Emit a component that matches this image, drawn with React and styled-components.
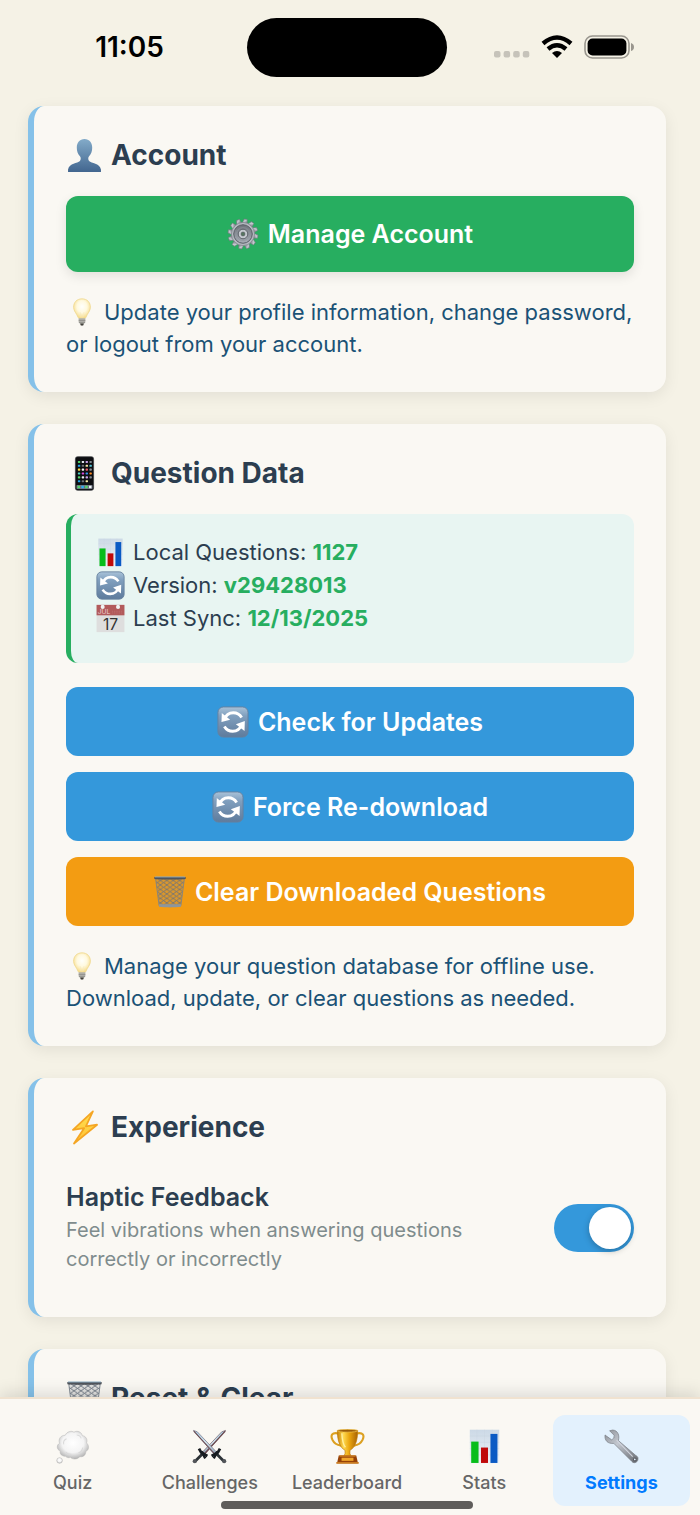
import React from "react";
import { useState } from "react";
import styled, { createGlobalStyle } from "styled-components";

const GlobalStyle = createGlobalStyle`
  * {
    box-sizing: border-box;
  }
  body {
    margin: 0;
    background-color: #f5f2e6;
    font-family: Inter, "Liberation Sans", sans-serif;
  }
`;

// gradients and patterns shared by all the icons
const IconDefs = () => (
  <Hiddensvg aria-hidden="true">
    <defs>
      <linearGradient id="bust" x1="0" y1="0" x2="0" y2="1">
        <stop offset="0" stopColor="#83abc9" />
        <stop offset="1" stopColor="#42668f" />
      </linearGradient>
      <linearGradient id="steel" x1="0" y1="0" x2="1" y2="1">
        <stop offset="0" stopColor="#8d9096" />
        <stop offset="0.4" stopColor="#c3c8d0" />
        <stop offset="1" stopColor="#64676d" />
      </linearGradient>
      <linearGradient id="gearFace" x1="0" y1="0" x2="0" y2="1">
        <stop offset="0" stopColor="#6d7279" />
        <stop offset="1" stopColor="#a9afb8" />
      </linearGradient>
      <radialGradient id="glow" cx="0.5" cy="0.4" r="0.6">
        <stop offset="0" stopColor="#fffffb" />
        <stop offset="0.5" stopColor="#fff9df" />
        <stop offset="1" stopColor="#f6d982" />
      </radialGradient>
      <linearGradient id="button" x1="0" y1="0" x2="0" y2="1">
        <stop offset="0" stopColor="#a9c2d8" />
        <stop offset="0.3" stopColor="#809fbe" />
        <stop offset="1" stopColor="#5e7b9c" />
      </linearGradient>
      <linearGradient id="paper" x1="0" y1="0" x2="0" y2="1">
        <stop offset="0" stopColor="#ccd9e6" />
        <stop offset="1" stopColor="#eef3f8" />
      </linearGradient>
      <linearGradient id="gold" x1="0" y1="0" x2="1" y2="0">
        <stop offset="0" stopColor="#c57f08" />
        <stop offset="0.3" stopColor="#ffd94f" />
        <stop offset="0.6" stopColor="#e9a40d" />
        <stop offset="1" stopColor="#a86305" />
      </linearGradient>
      <linearGradient id="bolt" x1="0" y1="0" x2="0" y2="1">
        <stop offset="0" stopColor="#ffe052" />
        <stop offset="1" stopColor="#ffc233" />
      </linearGradient>
      <radialGradient id="cloud" cx="0.5" cy="0.42" r="0.58">
        <stop offset="0" stopColor="#ffffff" />
        <stop offset="0.6" stopColor="#f4f4f4" />
        <stop offset="1" stopColor="#b4b4b4" />
      </radialGradient>
      <linearGradient id="blade" x1="0" y1="0" x2="0" y2="1">
        <stop offset="0" stopColor="#a5cfe6" />
        <stop offset="0.5" stopColor="#d5e8f2" />
        <stop offset="1" stopColor="#8fa3b5" />
      </linearGradient>
      <pattern id="mesh" width="20" height="14" patternUnits="userSpaceOnUse">
        <path d="M0 0L20 14M20 0L0 14" stroke="#69727e" strokeWidth="2.6" />
      </pattern>
    </defs>
  </Hiddensvg>
);

const shapes = {
  person: (
    <path
      d="M50 3C36 3 28 13 28 28C28 38 31 46 37 52C40 56 40 61 37 66C30 73 7 71 3 90V97H97V90C93 71 70 73 63 66C60 61 60 56 63 52C69 46 72 38 72 28C72 13 64 3 50 3Z"
      fill="url(#bust)"
    />
  ),
  gear: (
    <g>
      {Array.from({ length: 12 }, (_, i) => (
        <path
          key={i}
          d="M42 17L45 3H55L58 17Z"
          fill="url(#steel)"
          stroke="#70747a"
          strokeWidth="1.5"
          transform={`rotate(${i * 30 + 10} 50 50)`}
        />
      ))}
      <circle cx="50" cy="50" r="36" fill="#b7bcc3" stroke="#777b82" strokeWidth="2" />
      <circle cx="50" cy="50" r="29" fill="url(#gearFace)" stroke="#555a61" strokeWidth="3" />
      <circle cx="50" cy="50" r="20" fill="none" stroke="#8e949c" strokeWidth="2" />
      <circle cx="50" cy="50" r="15" fill="#c4c8ce" stroke="#5b6067" strokeWidth="3" />
      <circle cx="50" cy="50" r="6" fill="#55765e" stroke="#53585e" strokeWidth="2" />
    </g>
  ),
  bulb: (
    <g>
      <path
        d="M50 3C31 3 20 16 20 33C20 47 31 55 36 69Q37 73 41 73H59Q63 73 64 69C69 55 80 47 80 33C80 16 69 3 50 3Z"
        fill="url(#glow)"
        stroke="#f0d98f"
        strokeWidth="3"
      />
      <path d="M43 50L47 70M57 50L53 70" stroke="#f6e9c0" strokeWidth="2" />
      <path d="M38 72H62V86Q62 89 58 91L55 97H45L42 91Q38 89 38 86Z" fill="#b3b2ab" />
      <path d="M38 80H62M39 87H61" stroke="#7b7a74" strokeWidth="2" />
      <path d="M44 91H56L54 98H46Z" fill="#44423d" />
    </g>
  ),
  phone: (
    <g>
      <rect x="24" y="2" width="52" height="96" rx="6" fill="#0d0e11" stroke="#3a3c40" strokeWidth="2" />
      {[14, 25, 36, 47, 58, 69].map((y, row) =>
        [31, 42, 53, 64].map((x, col) =>
          row === 5 && col === 3 ? null : (
            <rect
              key={x + "-" + y}
              x={x}
              y={y}
              width="7"
              height="6"
              rx="2"
              fill={
                ["#53d769", "#e8eef3", "#c9a0e8", "#808890", "#21a7ef", "#6d7076", "#f6e7a3", "#54c5d5", "#ffdc40", "#f5f5f5", "#e95b68", "#8a9097", "#4bd0c2", "#d84ad9", "#3692ef", "#ff8a25"][
                  (row * 4 + col) % 16
                ]
              }
            />
          )
        )
      )}
      <rect x="27" y="83" width="46" height="11" rx="2" fill="#6c7380" />
      <path d="M30 85h7v7h-7z" fill="#53d769" />
      <path d="M41 85h7v7h-7z" fill="#2cadf3" />
      <path d="M52 85h7v7h-7z" fill="#53d769" />
      <path d="M63 85h7v7h-7z" fill="#f4f7f9" />
    </g>
  ),
  chart: (
    <g>
      <rect x="8" y="2" width="84" height="96" fill="url(#paper)" />
      <path d="M8 20H92M8 38H92M8 56H92M8 74H92M28 2V98M50 2V98M72 2V98" stroke="#c8d4e0" strokeWidth="1" />
      <rect x="12" y="36" width="21" height="61" fill="#08bd1b" />
      <rect x="40" y="53" width="20" height="44" fill="#c00a0a" />
      <rect x="67" y="14" width="20" height="83" fill="#0a5ac4" />
    </g>
  ),
  refresh: (
    <g>
      <rect x="3" y="3" width="94" height="94" rx="17" fill="url(#button)" stroke="#67819e" strokeWidth="3" />
      <path d="M23 42C28 27 38 21 51 21C62 21 71 26 77 36" fill="none" stroke="#fff" strokeWidth="9" />
      <path d="M77 58C72 73 62 79 49 79C38 79 29 74 23 64" fill="none" stroke="#fff" strokeWidth="9" />
      <path d="M15 22L14 50L41 43Z" fill="#fff" />
      <path d="M87 47L86 78L59 57Z" fill="#fff" />
    </g>
  ),
  calendar: (
    <g>
      <rect x="2" y="3" width="96" height="94" fill="#dedede" />
      <rect x="2" y="3" width="96" height="36" fill="#b25a5b" />
      <circle cx="23" cy="10" r="7" fill="#f0f3f3" />
      <circle cx="76" cy="10" r="7" fill="#f0f3f3" />
      <text x="6" y="35" fontSize="23" fill="#ecd2d2">JUL</text>
      <text x="50" y="90" textAnchor="middle" fontSize="54" fill="#333">17</text>
      <path d="M56 25H90M56 31H90" stroke="#c67b7b" strokeWidth="2" strokeDasharray="3 3" />
    </g>
  ),
  trash: (
    <g>
      <path d="M5 8L16 93Q50 99 84 93L95 8Z" fill="#7c858f" fillOpacity="0.2" />
      <path d="M5 8L16 93Q50 99 84 93L95 8Z" fill="url(#mesh)" stroke="#78818b" strokeWidth="2.5" />
      <path d="M15 88H85L84 96Q50 100 16 96Z" fill="#8d969c" />
      <path d="M1 3H99V9Q50 13 1 9Z" fill="#50545b" />
      <path d="M3 3H97" stroke="#8aa9bf" strokeWidth="3" />
    </g>
  ),
  bolt: (
    <path
      d="M74 4L17 57L49 52L20 96L86 42L54 47Z"
      fill="url(#bolt)"
      stroke="#f5a623"
      strokeWidth="5"
      strokeLinejoin="round"
    />
  ),
  thought: (
    <g stroke="#b9b9b9" strokeWidth="1.5">
      <path
        d="M30 78C19 78 13 71 15 63C4 59 4 45 13 41C8 28 18 17 29 18C34 7 47 4 54 9C65 3 76 9 78 19C89 20 94 31 90 40C99 47 97 61 88 64C88 75 80 81 71 79C64 87 51 88 44 81C39 83 34 82 30 78Z"
        fill="url(#cloud)"
      />
      <circle cx="13" cy="90" r="8" fill="url(#cloud)" />
      <path d="M33 28Q22 33 25 44M62 17Q72 17 75 27M79 53Q77 66 67 68M47 72Q36 74 31 66" fill="none" stroke="#dadada" strokeWidth="3" />
    </g>
  ),
  swords: (
    <g>
      <path d="M96 4L85 8L30 66L37 72Z" fill="url(#blade)" stroke="#77616a" strokeWidth="2" />
      <path d="M95 6L36 70" stroke="#6b4a50" strokeWidth="4" />
      <path d="M4 4L15 8L70 66L63 72Z" fill="url(#blade)" stroke="#777082" strokeWidth="2" />
      <path d="M5 6L64 70" stroke="#6b4a50" strokeWidth="3" />
      <path d="M33 68L9 92M67 68L91 92" stroke="#2c3236" strokeWidth="8" />
      <path d="M20 56L26 67L44 77M80 56L74 67L56 77" fill="none" stroke="#171c20" strokeWidth="8" strokeLinejoin="round" />
      <path d="M27 64L38 84M73 64L62 84" stroke="#171c20" strokeWidth="7" />
      <circle cx="8" cy="92" r="6" fill="#53565a" />
      <circle cx="92" cy="92" r="6" fill="#53565a" />
    </g>
  ),
  trophy: (
    <g>
      <path d="M25 13C5 8 1 19 7 31Q13 44 32 48M75 13C95 8 99 19 93 31Q87 44 68 48" fill="none" stroke="#dca020" strokeWidth="6" />
      <path d="M21 4H79C79 31 73 52 57 61Q55 70 60 78H40Q45 70 43 61C27 52 21 31 21 4Z" fill="url(#gold)" stroke="#bd7b0b" strokeWidth="2" />
      <ellipse cx="50" cy="5" rx="29" ry="4" fill="#9a5c08" stroke="#f3c54f" strokeWidth="2" />
      <path d="M34 12Q35 41 44 52" fill="none" stroke="#fff0a1" strokeWidth="4" />
      <path d="M25 76H75L80 98H20Z" fill="#964107" />
      <path d="M27 75H73V79H27ZM18 94H82V99H18Z" fill="#ca7c21" />
      <rect x="33" y="82" width="34" height="9" fill="#f0a62c" />
    </g>
  ),
  wrench: (
    <g>
      <path
        d="M25 3L16 5L29 18Q31 27 22 31L8 21L3 17C1 33 11 43 28 41L79 92C86 101 99 95 97 82Q96 78 90 75L41 33C45 19 40 4 25 3Z"
        fill="url(#steel)"
        stroke="#777b82"
        strokeWidth="2"
      />
      <path d="M36 32L82 79" stroke="#d0d4dd" strokeWidth="3" />
      <circle cx="88" cy="87" r="4" fill="#e3f1fd" stroke="#595c62" strokeWidth="3" />
    </g>
  ),
};

const Emoji = ({ name, size }) => (
  <Emojisvg viewBox="0 0 100 100" $size={size} aria-hidden="true">
    {shapes[name]}
  </Emojisvg>
);

const StatusBar = () => (
  <Statusdiv>
    <Clock>11:05</Clock>
    <Island />
    <Statusicons>
      <svg width="36" height="24" viewBox="0 0 36 24" fill="#c6c3ba">
        <rect x="0" y="16" width="6.5" height="6.5" rx="2" />
        <rect x="9.6" y="16" width="6.5" height="6.5" rx="2" />
        <rect x="19.2" y="16" width="6.5" height="6.5" rx="2" />
        <rect x="28.8" y="16" width="6.5" height="6.5" rx="2" />
      </svg>
      <svg width="32" height="24" viewBox="0 0 32 24" fill="none" stroke="#000" strokeWidth="4.4">
        <path d="M2 8.5Q16 -3.5 30 8.5" />
        <path d="M7 14Q16 6.5 25 14" />
        <path d="M16 23L11 18Q16 14 21 18Z" fill="#000" stroke="none" />
      </svg>
      <svg width="50" height="24" viewBox="0 0 50 24">
        <rect x="1" y="1" width="44" height="22" rx="7.5" fill="none" stroke="#99968e" strokeWidth="1.6" />
        <rect x="3.6" y="3.6" width="38.8" height="16.8" rx="5" fill="#000" />
        <path d="M47 8Q50 9 50 12Q50 15 47 16Z" fill="#99968e" />
      </svg>
    </Statusicons>
  </Statusdiv>
);

const tabs = [
  { label: "Quiz", icon: "thought" },
  { label: "Challenges", icon: "swords" },
  { label: "Leaderboard", icon: "trophy" },
  { label: "Stats", icon: "chart" },
  { label: "Settings", icon: "wrench" },
];

const App = () => {
  const [haptic, setHaptic] = useState(true);
  const [activeTab, setActiveTab] = useState("Settings");

  return (
    <Screen>
      <GlobalStyle />
      <IconDefs />
      <Content>
        <StatusBar />
        <Cards>
          <Card>
            <Cardtitle>
              <Emoji name="person" size={35} />
              Account
            </Cardtitle>
            <Button $large $color="#27ae60">
              <Emoji name="gear" size={32} />
              Manage Account
            </Button>
            <Hint>
              <Emoji name="bulb" size={28} />
              Update your profile information, change password, or logout from
              your account.
            </Hint>
          </Card>

          <Card>
            <Cardtitle>
              <Emoji name="phone" size={35} />
              Question Data
            </Cardtitle>
            <Info>
              <Inforow>
                <Emoji name="chart" size={29} />
                <span>Local Questions: <strong>1127</strong></span>
              </Inforow>
              <Inforow>
                <Emoji name="refresh" size={29} />
                <span>Version: <strong>v29428013</strong></span>
              </Inforow>
              <Inforow>
                <Emoji name="calendar" size={29} />
                <span>Last Sync: <strong>12/13/2025</strong></span>
              </Inforow>
            </Info>
            <Buttons>
              <Button $color="#3498db">
                <Emoji name="refresh" size={32} />
                Check for Updates
              </Button>
              <Button $color="#3498db">
                <Emoji name="refresh" size={32} />
                Force Re-download
              </Button>
              <Button $color="#f39c12">
                <Emoji name="trash" size={32} />
                Clear Downloaded Questions
              </Button>
            </Buttons>
            <Hint>
              <Emoji name="bulb" size={28} />
              Manage your question database for offline use. Download, update,
              or clear questions as needed.
            </Hint>
          </Card>

          <Card>
            <Cardtitle>
              <Emoji name="bolt" size={35} />
              Experience
            </Cardtitle>
            <Setting>
              <div>
                <Settinglabel htmlFor="haptic">Haptic Feedback</Settinglabel>
                <Settingtext id="haptic-text">
                  Feel vibrations when answering questions correctly or
                  incorrectly
                </Settingtext>
              </div>
              <Toggle
                id="haptic"
                type="checkbox"
                aria-describedby="haptic-text"
                checked={haptic}
                onChange={(e) => setHaptic(e.target.checked)}
              />
            </Setting>
          </Card>

          <Card>
            <Cardtitle>
              <Emoji name="trash" size={35} />
              Reset &amp; Clear
            </Cardtitle>
          </Card>
        </Cards>
      </Content>

      <Tabbar>
        {tabs.map((tab) => (
          <Tab
            key={tab.label}
            $active={tab.label === activeTab}
            onClick={() => setActiveTab(tab.label)}
          >
            <Emoji name={tab.icon} size={35} />
            {tab.label}
          </Tab>
        ))}
        <Homeline />
      </Tabbar>
    </Screen>
  );
};

const Hiddensvg = styled.svg`
  position: absolute;
  width: 0;
  height: 0;
`;

const Emojisvg = styled.svg`
  width: ${(props) => props.$size}px;
  height: ${(props) => props.$size}px;
  flex: none;
`;

const Screen = styled.div`
  height: 100vh;
  display: flex;
  flex-direction: column;
`;

const Content = styled.main`
  flex: 1;
  min-height: 0;
  overflow-y: auto;
  scrollbar-width: none;
`;

const Statusdiv = styled.header`
  display: grid;
  grid-template-columns: 1fr 200px 1fr;
  align-items: center;
  height: 106px;
  padding: 0 6px 12px 0;
`;

const Clock = styled.time`
  padding-left: 12px;
  text-align: center;
  font-size: 28px;
  font-weight: 600;
  color: black;
`;

const Island = styled.div`
  height: 59px;
  border-radius: 30px;
  background-color: black;
`;

const Statusicons = styled.div`
  display: flex;
  justify-content: center;
  gap: 11px;
  padding-right: 14px;
`;

const Cards = styled.div`
  display: flex;
  flex-direction: column;
  gap: 32px;
  padding: 0 34px 32px 28px;
`;

const Card = styled.section`
  padding: 32px;
  border-left: 6px solid #85c1e9;
  border-radius: 16px;
  background-color: #faf8f3;
  box-shadow: 0 4px 16px rgba(0, 0, 0, 0.08);
`;

const Cardtitle = styled.h2`
  display: flex;
  align-items: center;
  gap: 9px;
  margin: 0 0 24px;
  padding-left: 1px;
  font-size: 28px;
  line-height: 34px;
  height: 34px;
  font-weight: 650;
  color: #2c3e50;
`;

const Button = styled.button`
  display: flex;
  align-items: center;
  justify-content: center;
  gap: 9px;
  width: 100%;
  height: ${(props) => (props.$large ? 76 : 69)}px;
  border: none;
  border-radius: 12px;
  background-color: ${(props) => props.$color};
  box-shadow: ${(props) =>
    props.$large ? "0 4px 12px rgba(0, 0, 0, 0.1)" : "none"};
  color: white;
  font-family: inherit;
  font-size: 25px;
  font-weight: 600;
  cursor: pointer;
`;

const Buttons = styled.div`
  display: flex;
  flex-direction: column;
  gap: 16px;
`;

const Hint = styled.p`
  margin: 24px 0 0;
  font-size: 22px;
  line-height: 32px;
  color: #1a5276;

  svg {
    margin: -4px 8px 0 2px;
    vertical-align: middle;
  }
`;

const Info = styled.div`
  margin-bottom: 24px;
  padding: 22px 24px 28px;
  border-left: 5px solid #27ae60;
  border-radius: 12px;
  background-color: #e8f5f2;
`;

const Inforow = styled.div`
  display: flex;
  align-items: center;
  gap: 8px;
  padding-left: 1px;
  font-size: 22px;
  line-height: 33px;
  color: #2c3e50;

  strong {
    font-weight: 700;
    color: #27ae60;
  }
`;

const Setting = styled.div`
  display: flex;
  align-items: center;
  justify-content: space-between;
  gap: 32px;
  padding: 14px 0 11px;
`;

const Settinglabel = styled.label`
  display: block;
  margin-bottom: 4px;
  font-size: 25px;
  line-height: 30px;
  font-weight: 600;
  color: #2c3e50;
`;

const Settingtext = styled.p`
  margin: 0;
  font-size: 20px;
  line-height: 29px;
  color: #7f8c8d;
`;

const Toggle = styled.input`
  appearance: none;
  flex: none;
  display: flex;
  justify-content: ${(props) => (props.checked ? "flex-end" : "flex-start")};
  width: 80px;
  height: 48px;
  margin: 0;
  padding: 3px;
  border-radius: 24px;
  background-color: ${(props) => (props.checked ? "#3498db" : "#bdc3c7")};
  cursor: pointer;

  &::before {
    content: "";
    width: 42px;
    height: 42px;
    border-radius: 50%;
    background-color: white;
    box-shadow: 0 2px 6px rgba(0, 0, 0, 0.25);
  }
`;

const Tabbar = styled.nav`
  position: relative;
  flex: none;
  display: flex;
  padding: 16px 10px 9px 4px;
  border-top: 2px solid #f0e2d0;
  background-color: #faf8f3;
  box-shadow: 0 -4px 16px rgba(0, 0, 0, 0.12);
`;

const Tab = styled.button`
  flex: 1 1 0;
  min-width: 0;
  display: flex;
  flex-direction: column;
  align-items: center;
  gap: 7px;
  height: 91px;
  padding: 14px 0 0;
  border: none;
  border-radius: 12px;
  background-color: ${(props) => (props.$active ? "#e3f1fd" : "transparent")};
  color: ${(props) => (props.$active ? "#007aff" : "#666666")};
  font-family: inherit;
  font-size: 18px;
  line-height: 24px;
  font-weight: ${(props) => (props.$active ? 700 : 500)};
  cursor: pointer;
`;

const Homeline = styled.div`
  position: absolute;
  bottom: 6px;
  left: 0;
  right: 6px;
  width: 36%;
  height: 8px;
  margin: 0 auto;
  border-radius: 4px;
  background-color: #5f5d5b;
`;

export default App;
